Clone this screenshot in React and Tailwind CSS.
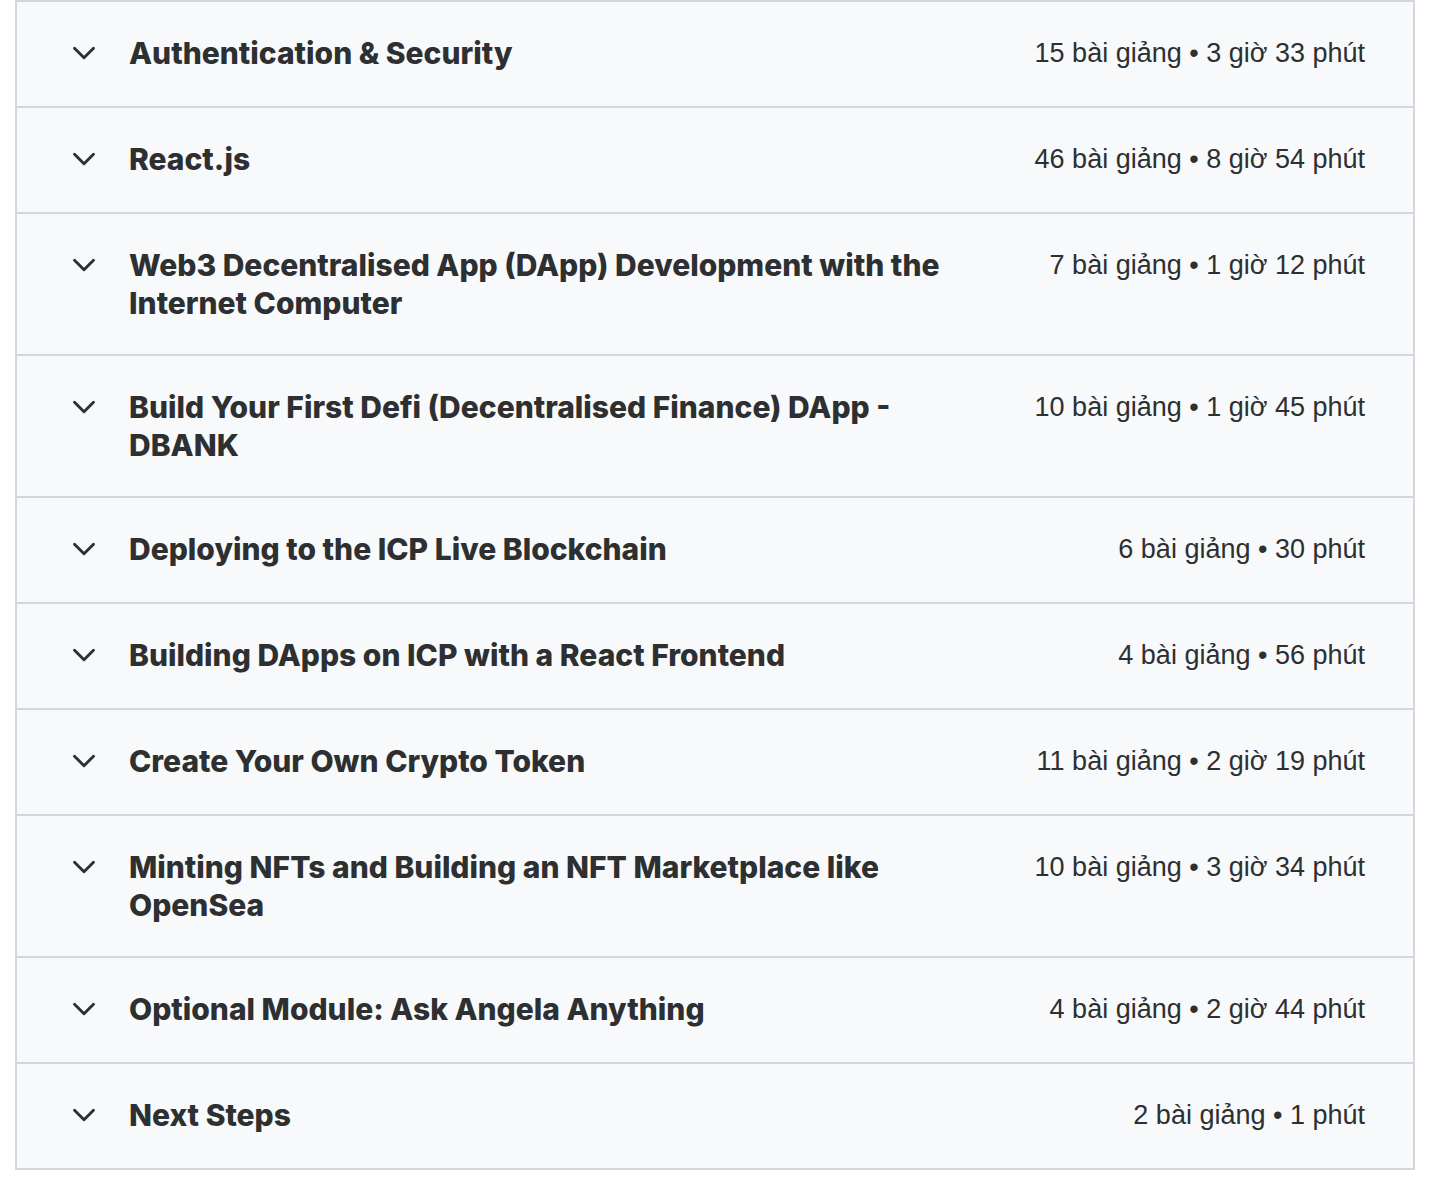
import { ChevronDown } from 'lucide-react';

const sections = [
  { title: 'Authentication & Security', lectures: 15, duration: '3 giờ 33 phút' },
  { title: 'React.js', lectures: 46, duration: '8 giờ 54 phút' },
  { title: 'Web3 Decentralised App (DApp) Development with the Internet Computer', lectures: 7, duration: '1 giờ 12 phút' },
  { title: 'Build Your First Defi (Decentralised Finance) DApp - DBANK', lectures: 10, duration: '1 giờ 45 phút' },
  { title: 'Deploying to the ICP Live Blockchain', lectures: 6, duration: '30 phút' },
  { title: 'Building DApps on ICP with a React Frontend', lectures: 4, duration: '56 phút' },
  { title: 'Create Your Own Crypto Token', lectures: 11, duration: '2 giờ 19 phút' },
  { title: 'Minting NFTs and Building an NFT Marketplace like OpenSea', lectures: 10, duration: '3 giờ 34 phút' },
  { title: 'Optional Module: Ask Angela Anything', lectures: 4, duration: '2 giờ 44 phút' },
  { title: 'Next Steps', lectures: 2, duration: '1 phút' },
];

function SectionRow({ section, first }) {
  return (
    <button
      type="button"
      className={`flex w-full items-start bg-[#f7f9fa] px-12 py-8 text-left ${first ? '' : 'border-t-2 border-[#d1d7dc]'}`}
    >
      <span className="flex h-[38px] w-[38px] shrink-0 items-center justify-center text-[#2d2f31]">
        <ChevronDown size={38} strokeWidth={1.8} />
      </span>
      <span className="ml-[26px] flex-1 font-['Inter',sans-serif] text-[30px] font-extrabold leading-[38px] tracking-normal text-[#2d2f31]">
        {section.title}
      </span>
      {/* meta line is a touch taller than the title, so single rows end up 2px taller */}
      <span className="ml-[80px] shrink-0 whitespace-nowrap pb-[2px] font-['Liberation_Sans',Arial,sans-serif] text-[27px] leading-[38px] text-[#2d2f31]">
        {section.lectures} bài giảng • {section.duration}
      </span>
    </button>
  );
}

export default function App() {
  return (
    <div className="min-h-screen bg-white font-['Inter',sans-serif]">
      <div className="ml-[15px] w-[1400px] border-2 border-[#d1d7dc]">
        {sections.map((section, i) => (
          <SectionRow key={section.title} section={section} first={i === 0} />
        ))}
      </div>
    </div>
  );
}
